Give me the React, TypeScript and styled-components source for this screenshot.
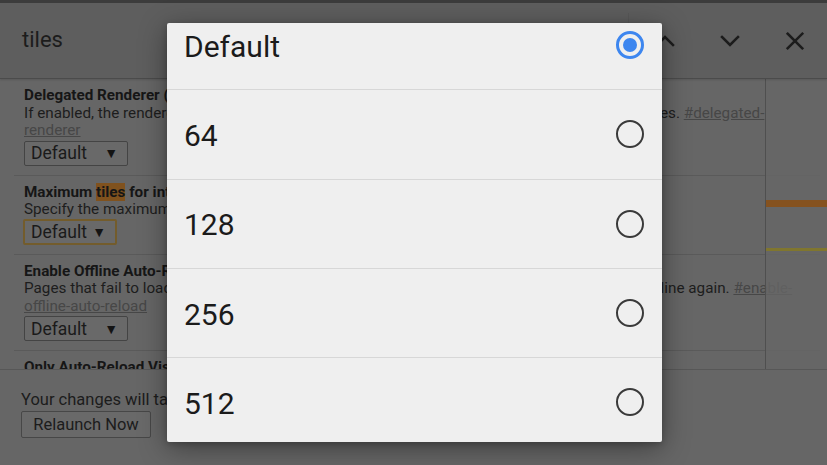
import React from 'react';
import styled, { createGlobalStyle } from 'styled-components';

const GlobalStyle = createGlobalStyle`
  html, body {
    margin: 0;
    padding: 0;
    background: #666666;
    overflow: hidden;
  }
  * {
    box-sizing: border-box;
  }
`;

const Screen = styled.div`
  position: relative;
  width: 827px;
  height: 465px;
  overflow: hidden;
  display: flex;
  flex-direction: column;
  background: #666666;
  font-family: Roboto, 'Liberation Sans', sans-serif;
  color: #191919;
`;

const FindBar = styled.div`
  height: 79px;
  flex-shrink: 0;
  display: flex;
  align-items: center;
  padding-left: 22px;
  background: #5e5e5e;
  border-top: 3px solid #3c3c3c;
  border-bottom: 1px solid #4b4b4b;
  box-shadow: 0 1px 2px rgba(0, 0, 0, 0.15);
  position: relative;
  z-index: 1;
`;

const Query = styled.div`
  flex: 1;
  font-size: 22px;
  color: #1c1c1c;
  padding-bottom: 2px;
`;

const BarDivider = styled.div`
  width: 1px;
  height: 56px;
  margin-right: 3px;
  background: #585858;
`;

const IconButton = styled.div`
  width: 65px;
  height: 60px;
  display: flex;
  align-items: center;
  justify-content: center;
  color: #1c1c1c;
`;

const Body = styled.div`
  flex: 1;
  position: relative;
  overflow: hidden;
`;

const FlagList = styled.div`
  padding: 0 0 0 14px;
  width: 820px;
`;

const Flag = styled.div`
  padding: 8px 0 9px 10px;
  border-bottom: 1px solid #5a5a5a;
`;

const FlagName = styled.div`
  font-size: 15.25px;
  line-height: 17.5px;
  font-weight: 700;
  color: #161616;
  white-space: nowrap;
`;

const Mark = styled.span`
  background: #80521e;
`;

const FlagDesc = styled.div`
  font-size: 15.25px;
  line-height: 17.5px;
  color: #1d1d1d;
  width: 780px;
`;

const FlagLink = styled.span`
  color: #474747;
  text-decoration: underline;
`;

const Select = styled.div<{ $width: number; $focused?: boolean }>`
  margin-top: ${p => (p.$focused ? '0' : '1px')};
  width: ${p => p.$width}px;
  height: ${p => (p.$focused ? '26px' : '25px')};
  display: flex;
  align-items: center;
  justify-content: space-between;
  padding: 0 9px 0 6px;
  font-size: 17.5px;
  color: #1a1a1a;
  background: #696969;
  border: ${p => (p.$focused ? '2px solid #735c2c' : '1px solid #444444')};
  border-radius: 2px;
  margin-left: ${p => (p.$focused ? '-1px' : '0')};
`;

const Caret = styled.span`
  font-size: 14px;
  color: #141414;
`;

const TickStrip = styled.div`
  position: absolute;
  top: 0;
  right: 0;
  bottom: 0;
  width: 62px;
  background: rgba(102, 102, 102, 0.8);
  border-left: 1px solid #4f4f4f;
`;

const Tick = styled.div<{ $top: number; $height: number; $color: string }>`
  position: absolute;
  left: 0;
  right: 0;
  top: ${p => p.$top}px;
  height: ${p => p.$height}px;
  background: ${p => p.$color};
`;

const Footer = styled.div`
  flex-shrink: 0;
  height: 96px;
  padding: 20px 0 0 21px;
  border-top: 1px solid #575757;
  background: #666666;
  position: relative;
  z-index: 2;
`;

const FooterText = styled.div`
  font-size: 16.5px;
  line-height: 20px;
  color: #1c1c1c;
  white-space: nowrap;
`;

const RelaunchButton = styled.div`
  margin-top: 1px;
  width: 130px;
  height: 27px;
  display: flex;
  align-items: center;
  justify-content: center;
  font-size: 16.5px;
  color: #1c1c1c;
  background: #696969;
  border: 1px solid #474747;
  border-radius: 2px;
`;

const Dialog = styled.div`
  position: absolute;
  left: 167px;
  top: 23px;
  width: 495px;
  height: 419px;
  background: #efefef;
  border-radius: 2px;
  overflow: hidden;
  box-shadow: 0 6px 28px rgba(0, 0, 0, 0.4), 0 2px 6px rgba(0, 0, 0, 0.2);
  z-index: 5;
`;

const OptionList = styled.div`
  margin-top: -22px;
`;

const Option = styled.div`
  height: 89.33px;
  display: flex;
  align-items: center;
  justify-content: space-between;
  padding: 0 18px 0 17px;
  border-bottom: 1px solid #d7d7d7;
  font-size: 30px;
  color: #1b1b1b;
`;

const OptionLabel = styled.span`
  padding-top: 2px;
`;

const Radio = styled.span<{ $checked: boolean }>`
  width: 28px;
  height: 28px;
  flex-shrink: 0;
  border-radius: 50%;
  border: ${p => (p.$checked ? '3px solid #3d86ef' : '2.5px solid #3a3a3a')};
  display: flex;
  align-items: center;
  justify-content: center;

  &::after {
    content: '';
    width: 14px;
    height: 14px;
    flex-shrink: 0;
    border-radius: 50%;
    background: ${p => (p.$checked ? '#3d86ef' : 'transparent')};
  }
`;

const ChevronUp = () => (
  <svg width="32" height="32" viewBox="0 0 24 24" fill="none" stroke="currentColor" strokeWidth="1.9" strokeLinecap="square">
    <path d="M6 15l6-6 6 6" />
  </svg>
);

const ChevronDown = () => (
  <svg width="32" height="32" viewBox="0 0 24 24" fill="none" stroke="currentColor" strokeWidth="1.9" strokeLinecap="square">
    <path d="M6 9l6 6 6-6" />
  </svg>
);

const CloseIcon = () => (
  <svg width="32" height="32" viewBox="0 0 24 24" fill="none" stroke="currentColor" strokeWidth="1.9" strokeLinecap="square">
    <path d="M6.5 6.5l11 11M17.5 6.5l-11 11" />
  </svg>
);

const App: React.FC = () => {
  const options = ['Default', '64', '128', '256', '512'];
  const selected = 'Default';

  return (
    <>
      <GlobalStyle />
      <Screen>
        <FindBar>
          <Query>tiles</Query>
          <BarDivider />
          <IconButton><ChevronUp /></IconButton>
          <IconButton><ChevronDown /></IconButton>
          <IconButton><CloseIcon /></IconButton>
        </FindBar>

        <Body>
          <FlagList>
            <Flag>
              <FlagName>Delegated Renderer (Android)</FlagName>
              <FlagDesc>
                If enabled, the renderer delegates compositing to the browser, merging both compositing passes.{' '}
                <FlagLink>#delegated-renderer</FlagLink>
              </FlagDesc>
              <Select $width={104}>Default <Caret>▼</Caret></Select>
            </Flag>
            <Flag>
              <FlagName>Maximum <Mark>tiles</Mark> for interest area</FlagName>
              <FlagDesc>
                Specify the maximum number of tiles for the interest area.{' '}
                <FlagLink>#max-tiles-for-interest-area</FlagLink>
              </FlagDesc>
              <Select $width={94} $focused>Default <Caret>▼</Caret></Select>
            </Flag>
            <Flag>
              <FlagName>Enable Offline Auto-Reload Mode</FlagName>
              <FlagDesc>
                Pages that fail to load while the browser is offline will be auto-reloaded when the browser is online again.{' '}
                <FlagLink>#enable-offline-auto-reload</FlagLink>
              </FlagDesc>
              <Select $width={104}>Default <Caret>▼</Caret></Select>
            </Flag>
            <Flag>
              <FlagName>Only Auto-Reload Visible Tabs</FlagName>
            </Flag>
          </FlagList>

          <TickStrip>
            <Tick $top={121} $height={7} $color="#85521f" />
            <Tick $top={169} $height={3} $color="#80762e" />
          </TickStrip>
        </Body>

        <Footer>
          <FooterText>Your changes will take effect the next time you relaunch Google Chrome.</FooterText>
          <RelaunchButton>Relaunch Now</RelaunchButton>
        </Footer>

        <Dialog>
          <OptionList>
            {options.map(option => (
              <Option key={option}>
                <OptionLabel>{option}</OptionLabel>
                <Radio $checked={option === selected} />
              </Option>
            ))}
          </OptionList>
        </Dialog>
      </Screen>
    </>
  );
};

export default App;
